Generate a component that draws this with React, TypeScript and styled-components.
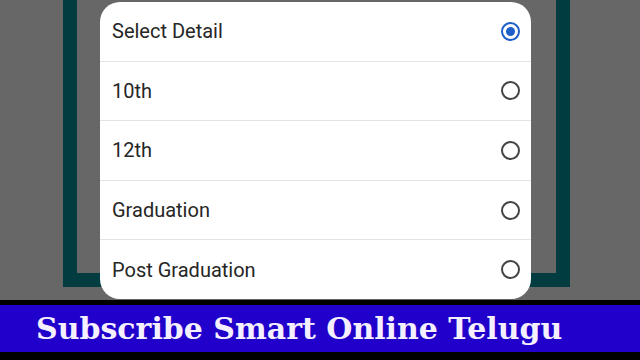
import React from 'react';
import styled, { createGlobalStyle } from 'styled-components';

const GlobalStyle = createGlobalStyle`
  html, body {
    margin: 0;
    padding: 0;
    width: 640px;
    height: 360px;
    overflow: hidden;
    background: #666666;
  }
`;

const Page = styled.div`
  width: 640px;
  height: 360px;
  display: flex;
  flex-direction: column;
`;

const Stage = styled.div`
  position: relative;
  height: 300px;
  background: #676767;
`;

const Frame = styled.div`
  margin-left: 63px;
  width: 479px;
  height: 273px;
  border: 14px solid #013c40;
  border-top: none;
`;

const Dialog = styled.div`
  position: absolute;
  left: 100px;
  top: 2px;
  width: 431px;
  height: 297px;
  background: #ffffff;
  border-radius: 20px;
  display: flex;
  flex-direction: column;
  overflow: hidden;
`;

const Row = styled.div<{ $last?: boolean }>`
  flex: 1;
  display: flex;
  align-items: center;
  justify-content: space-between;
  padding: 0 11px 0 12px;
  border-bottom: ${({ $last }) => ($last ? 'none' : '1px solid #e4e4e4')};
  font-family: Roboto, 'Noto Sans', sans-serif;
  font-size: 20px;
  color: #262626;
`;

const Radio = styled.span<{ $checked?: boolean }>`
  width: 15px;
  height: 15px;
  border-radius: 50%;
  border: 2px solid ${({ $checked }) => ($checked ? '#1d5fc8' : '#444444')};
  display: flex;
  align-items: center;
  justify-content: center;

  &::after {
    content: '';
    width: 9px;
    height: 9px;
    border-radius: 50%;
    background: ${({ $checked }) => ($checked ? '#1d5fc8' : 'transparent')};
  }
`;

const Banner = styled.div`
  flex: 1;
  background: #000000;
  padding: 5px 0 8px;
  display: flex;
`;

const BannerBar = styled.div`
  flex: 1;
  background: #2200cc;
  display: flex;
  align-items: center;
  padding-left: 36px;
  font-family: 'DejaVu Serif', 'Liberation Serif', serif;
  font-weight: bold;
  font-size: 30px;
  color: #f4f0ff;
  white-space: nowrap;
`;

const options = ['Select Detail', '10th', '12th', 'Graduation', 'Post Graduation'];

const App: React.FC = () => (
  <>
    <GlobalStyle />
    <Page>
      <Stage>
        <Frame />
        <Dialog>
          {options.map((label, i) => (
            <Row key={label} $last={i === options.length - 1}>
              <span>{label}</span>
              <Radio $checked={i === 0} />
            </Row>
          ))}
        </Dialog>
      </Stage>
      <Banner>
        <BannerBar>Subscribe Smart Online Telugu</BannerBar>
      </Banner>
    </Page>
  </>
);

export default App;
